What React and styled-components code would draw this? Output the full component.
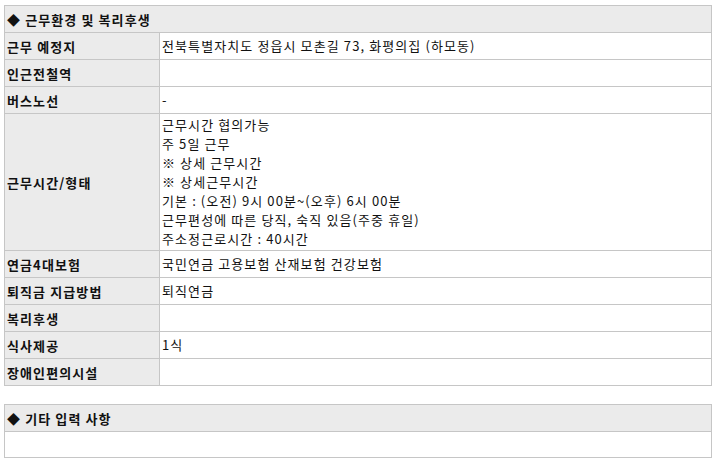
import React from 'react'
import styled, { createGlobalStyle } from 'styled-components'

const colors = {
  border: '#c6c6c6',
  head: '#ebebeb',
  text: '#111111',
  white: '#ffffff'
}

const GlobalStyle = createGlobalStyle`
  body {
    margin: 0;
    background: ${colors.white};
    font-family: "Noto Sans CJK KR", "Noto Sans", sans-serif;
    font-size: 13px;
    letter-spacing: 1.1px;
    color: ${colors.text};
  }
`

const Page = styled.div`
  padding: 5px 6px 5px 4px;
  display: flex;
  flex-direction: column;
  gap: 18px;
`

const Section = styled.section`
  border-left: 1px solid ${colors.border};
  border-top: 1px solid ${colors.border};
  display: grid;
  grid-template-columns: 155px 1fr;
`

const SectionTitle = styled.h3`
  grid-column: 1 / -1;
  margin: 0;
  min-height: 26px;
  padding: 0 2px;
  display: flex;
  align-items: center;
  background: ${colors.head};
  font-size: 13px;
  font-weight: bold;
  line-height: 19px;
  border-right: 1px solid ${colors.border};
  border-bottom: 1px solid ${colors.border};
`

const Label = styled.div`
  min-height: 26px;
  padding: 0 2px;
  display: flex;
  align-items: center;
  background: ${colors.head};
  font-weight: bold;
  line-height: 19px;
  border-right: 1px solid ${colors.border};
  border-bottom: 1px solid ${colors.border};
`

const Value = styled.div`
  grid-column: ${({ full }) => (full ? '1 / -1' : 'auto')};
  min-height: 26px;
  padding: 1px 2px 2px;
  box-sizing: border-box;
  display: flex;
  flex-direction: column;
  justify-content: center;
  line-height: 19px;
  border-right: 1px solid ${colors.border};
  border-bottom: 1px solid ${colors.border};
`

const rows = [
  { label: '근무 예정지', lines: ['전북특별자치도 정읍시 모촌길 73, 화평의집 (하모동)'] },
  { label: '인근전철역', lines: [] },
  { label: '버스노선', lines: ['-'] },
  {
    label: '근무시간/형태',
    lines: [
      '근무시간 협의가능',
      '주 5일 근무',
      '※ 상세 근무시간',
      '※ 상세근무시간',
      '기본 : (오전) 9시 00분~(오후) 6시 00분',
      '근무편성에 따른 당직, 숙직 있음(주중 휴일)',
      '주소정근로시간 : 40시간'
    ]
  },
  { label: '연금4대보험', lines: ['국민연금 고용보험 산재보험 건강보험'] },
  { label: '퇴직금 지급방법', lines: ['퇴직연금'] },
  { label: '복리후생', lines: [] },
  { label: '식사제공', lines: ['1식'] },
  { label: '장애인편의시설', lines: [] }
]

const App = () => (
  <>
    <GlobalStyle />
    <Page>
      <Section>
        <SectionTitle>◆ 근무환경 및 복리후생</SectionTitle>
        {rows.map(row => (
          <React.Fragment key={row.label}>
            <Label>{row.label}</Label>
            <Value>
              {row.lines.map(line => (
                <span key={line}>{line}</span>
              ))}
            </Value>
          </React.Fragment>
        ))}
      </Section>
      <Section>
        <SectionTitle>◆ 기타 입력 사항</SectionTitle>
        <Value full />
      </Section>
    </Page>
  </>
)

export default App
